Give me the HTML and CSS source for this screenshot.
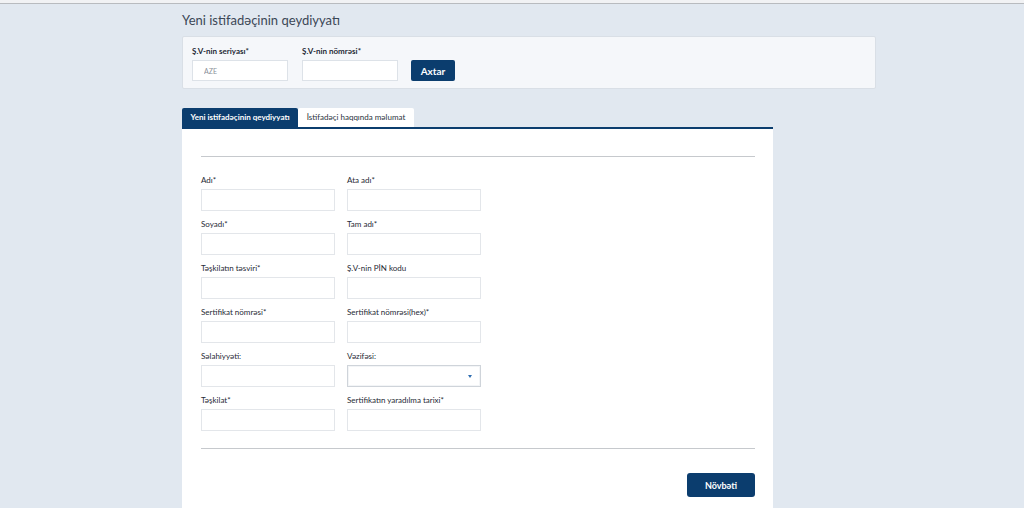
FILE: index.html
```html
<!DOCTYPE html>
<html lang="az">
<head>
<meta charset="utf-8">
<title>Yeni istifadəçinin qeydiyyatı</title>
<link rel="stylesheet" href="styles.css">
</head>
<body>
<div class="topbar"></div>
<main class="page">
  <h1 class="title">Yeni istifadəçinin qeydiyyatı</h1>
  <section class="search">
    <div class="sfield">
      <label class="slabel">Ş.V-nin seriyası*</label>
      <input class="sinput" type="text" placeholder="AZE">
    </div>
    <div class="sfield">
      <label class="slabel">Ş.V-nin nömrəsi*</label>
      <input class="sinput" type="text">
    </div>
    <button class="btn btn-search">Axtar</button>
  </section>

  <div class="tabs">
    <div class="tab active">Yeni istifadəçinin qeydiyyatı</div>
    <div class="tab">İstifadəçi haqqında məlumat</div>
  </div>
  <section class="panel">
    <hr class="sep">
    <div class="grid">
      <div class="field"><label>Adı*</label><input type="text"></div>
      <div class="field"><label>Ata adı*</label><input type="text"></div>
      <div class="field"><label>Soyadı*</label><input type="text"></div>
      <div class="field"><label>Tam adı*</label><input type="text"></div>
      <div class="field"><label>Təşkilatın təsviri*</label><input type="text"></div>
      <div class="field"><label>Ş.V-nin PİN kodu</label><input type="text"></div>
      <div class="field"><label>Sertifikat nömrəsi*</label><input type="text"></div>
      <div class="field"><label>Sertifikat nömrəsi(hex)*</label><input type="text"></div>
      <div class="field"><label>Səlahiyyəti:</label><input type="text"></div>
      <div class="field"><label>Vəzifəsi:</label>
        <div class="select"><span class="caret"></span></div>
      </div>
      <div class="field"><label>Təşkilat*</label><input type="text"></div>
      <div class="field"><label>Sertifikatın yaradılma tarixi*</label><input type="text"></div>
    </div>
    <hr class="sep sep-bottom">
    <div class="actions">
      <button class="btn btn-next">Növbəti</button>
    </div>
  </section>
</main>
</body>
</html>
```
FILE: styles.css
```css
* { box-sizing: border-box; }
html, body { margin: 0; padding: 0; }
body {
  background: #e1e8f0;
  font-family: Lato, "Open Sans", "Liberation Sans", sans-serif;
  color: #2b3440;
  height: 508px;
  overflow: hidden;
}
.topbar {
  height: 4px;
  background: #f1f2f4;
  border-bottom: 1px solid #b8bbbf;
}
.page {
  width: 694px;
  margin-left: 182px;
}
.title {
  margin: 0;
  padding-top: 7px;
  height: 32px;
  font-size: 13px;
  font-weight: 400;
  color: #3b4756;
  line-height: 18px;
}
.search {
  display: flex;
  align-items: flex-end;
  gap: 14px;
  height: 53px;
  padding: 0 9px 7px 9px;
  background: #f5f7fa;
  border: 1px solid #d9dfe6;
  border-radius: 2px;
}
.sfield { display: flex; flex-direction: column; gap: 4px; }
.slabel {
  font-size: 8px;
  font-weight: 700;
  color: #1f2a36;
  line-height: 10px;
}
.sinput {
  width: 96px;
  height: 21px;
  border: 1px solid #dde2e8;
  background: #fff;
  padding: 0 11px;
  font-family: inherit;
  font-size: 7px;
  color: #333;
  outline: none;
}
.sinput::placeholder { color: #8a9099; }
.btn {
  border: 0;
  background: #0b3d6e;
  color: #fff;
  font-family: inherit;
  font-weight: 700;
  cursor: pointer;
}
.btn-search {
  width: 44px;
  height: 21px;
  margin-left: -1px;
  border-radius: 2px;
  font-size: 10px;
}
.tabs {
  display: flex;
  margin-top: 19px;
  height: 19px;
}
.tab {
  width: 116px;
  font-size: 8px;
  font-weight: 400;
  line-height: 19px;
  text-align: center;
  background: #fff;
  color: #2b3440;
  border-radius: 2px 2px 0 0;
}
.tab.active { background: #0b3d6e; color: #fff; font-weight: 700; }
.panel {
  width: 591px;
  background: #fff;
  border-top: 2px solid #0b3d6e;
  padding: 27px 18px 20px 19px;
}
.sep {
  margin: 0;
  border: 0;
  border-top: 1px solid #c6c9cd;
}
.grid {
  display: grid;
  grid-template-columns: 134px 134px;
  column-gap: 12px;
  row-gap: 6px;
  padding-top: 16px;
  padding-bottom: 17px;
}
.field { display: flex; flex-direction: column; }
.field label {
  font-size: 8px;
  font-weight: 400;
  color: #1f2a36;
  line-height: 10px;
  height: 16px;
  padding-top: 2px;
}
.field input, .select {
  width: 134px;
  height: 22px;
  border: 1px solid #e3e6ea;
  background: #fff;
  outline: none;
  font-family: inherit;
}
.select {
  position: relative;
  border-color: #cfd4da;
  box-shadow: inset 0 0 0 1px #f3f5f7;
}
.caret {
  position: absolute;
  right: 8px;
  top: 9px;
  width: 0;
  height: 0;
  border-left: 2.5px solid transparent;
  border-right: 2.5px solid transparent;
  border-top: 3px solid #2f6db0;
}
.actions {
  display: flex;
  justify-content: flex-end;
  padding-top: 24px;
}
.btn-next {
  width: 68px;
  height: 24px;
  border-radius: 3px;
  font-size: 9px;
}
```
